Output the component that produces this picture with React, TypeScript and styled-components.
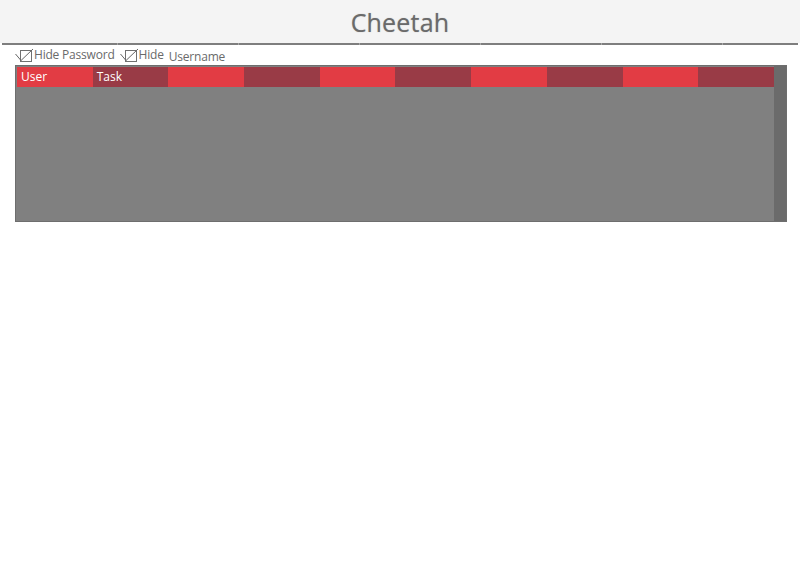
import React, { useState } from 'react';
import styled, { createGlobalStyle } from 'styled-components';

const GlobalStyle = createGlobalStyle`
  html, body {
    margin: 0;
    padding: 0;
    background: #fff;
    font-family: "Open Sans", "Liberation Sans", sans-serif;
  }
`;

const Page = styled.div`
  width: 800px;
  height: 575px;
  background: #fff;
`;

const Header = styled.header`
  height: 43px;
  background: #f4f4f4;
  display: flex;
  align-items: center;
  justify-content: center;
`;

const Title = styled.h1`
  margin: 0;
  font-size: 25px;
  font-weight: 400;
  color: #6a6a6a;
  letter-spacing: 0.2px;
  text-shadow: 0 0 1px rgba(100, 100, 100, 0.5);
`;

const Rule = styled.div`
  display: flex;
  margin: 0 2px;
  height: 2px;
  overflow: hidden;
`;

const RuleSegment = styled.div<{ $w: number }>`
  flex: 0 0 ${({ $w }) => $w}px;
  background: #7e7e7e;
  border-right: 1px solid #a8a8a8;
  &:last-child {
    border-right: none;
  }
`;

const Options = styled.div`
  display: flex;
  align-items: flex-start;
  gap: 5px;
  padding: 2px 0 0 15px;
  height: 18px;
`;

const Option = styled.label`
  display: flex;
  align-items: flex-start;
  font-size: 12px;
  letter-spacing: -0.2px;
  color: #6a6a6a;
  cursor: pointer;
  line-height: 16px;
`;

const Box = styled.span`
  display: block;
  width: 19px;
  height: 15px;
  margin-top: 1px;
`;

const Lower = styled.span`
  margin-left: 5px;
  margin-top: 2px;
`;

const Grid = styled.div`
  margin: 0 0 0 15px;
  width: 770px;
  height: 155px;
  border: 1px solid #6e6e6e;
  background: #808080;
  display: flex;
`;

const GridMain = styled.div`
  flex: 1;
  padding: 1px 0 0 1px;
`;

const HeadRow = styled.div`
  display: grid;
  grid-template-columns: repeat(10, 1fr);
  height: 20px;
`;

const HeadCell = styled.div<{ $dark: boolean }>`
  background: ${({ $dark }) => ($dark ? '#993b46' : '#e23c44')};
  color: #fff;
  font-size: 12px;
  line-height: 20px;
  padding: 0 4px;
  white-space: nowrap;
`;

const Scroll = styled.div`
  width: 12px;
  background: #6b6b6b;
`;

const Check = ({ on }: { on: boolean }) => (
  <Box>
    <svg width="19" height="15" viewBox="0 0 19 15" fill="none">
      <rect x="5.5" y="2.5" width="11" height="11" stroke="#707070" strokeWidth="1" />
      {on && <path d="M0.5 6 L6 12.5 L18 1" stroke="#666" strokeWidth="1" />}
    </svg>
  </Box>
);

const columns = ['User', 'Task', '', '', '', '', '', '', '', ''];

const App = () => {
  const [hidePass, setHidePass] = useState(true);
  const [hideUser, setHideUser] = useState(true);

  return (
    <Page>
      <GlobalStyle />
      <Header>
        <Title>Cheetah</Title>
      </Header>
      <Rule>
        {[115, 120, 120, 120, 120, 120, 81].map((w, i) => (
          <RuleSegment key={i} $w={w} />
        ))}
      </Rule>
      <Options>
        <Option onClick={() => setHidePass(!hidePass)}>
          <Check on={hidePass} />
          Hide Password
        </Option>
        <Option onClick={() => setHideUser(!hideUser)}>
          <Check on={hideUser} />
          Hide<Lower>Username</Lower>
        </Option>
      </Options>
      <Grid>
        <GridMain>
          <HeadRow>
            {columns.map((c, i) => (
              <HeadCell key={i} $dark={i % 2 === 1}>{c}</HeadCell>
            ))}
          </HeadRow>
        </GridMain>
        <Scroll />
      </Grid>
    </Page>
  );
};

export default App;
